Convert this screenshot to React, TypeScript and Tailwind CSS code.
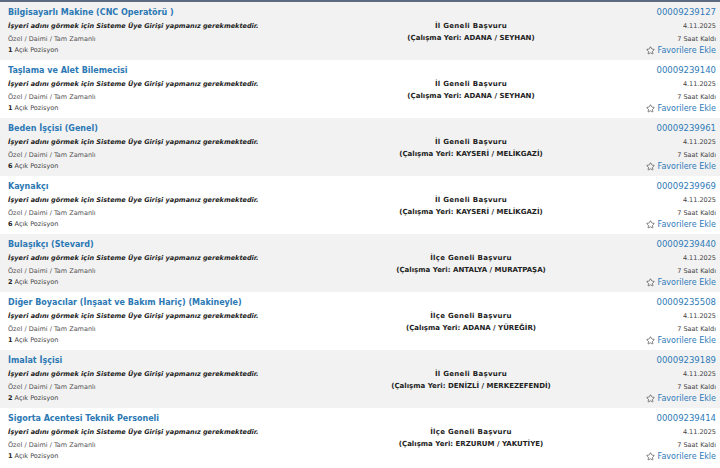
import { Star } from 'lucide-react';

const jobs = [
  { title: 'Bilgisayarlı Makine (CNC Operatörü )', scope: 'İl Geneli Başvuru', place: 'ADANA / SEYHAN', no: '00009239127', count: 1 },
  { title: 'Taşlama ve Alet Bilemecisi', scope: 'İl Geneli Başvuru', place: 'ADANA / SEYHAN', no: '00009239140', count: 1 },
  { title: 'Beden İşçisi (Genel)', scope: 'İl Geneli Başvuru', place: 'KAYSERİ / MELİKGAZİ', no: '00009239961', count: 6 },
  { title: 'Kaynakçı', scope: 'İl Geneli Başvuru', place: 'KAYSERİ / MELİKGAZİ', no: '00009239969', count: 6 },
  { title: 'Bulaşıkçı (Stevard)', scope: 'İlçe Geneli Başvuru', place: 'ANTALYA / MURATPAŞA', no: '00009239440', count: 2 },
  { title: 'Diğer Boyacılar (İnşaat ve Bakım Hariç) (Makineyle)', scope: 'İlçe Geneli Başvuru', place: 'ADANA / YÜREĞİR', no: '00009235508', count: 1 },
  { title: 'İmalat İşçisi', scope: 'İl Geneli Başvuru', place: 'DENİZLİ / MERKEZEFENDİ', no: '00009239189', count: 2 },
  { title: 'Sigorta Acentesi Teknik Personeli', scope: 'İlçe Geneli Başvuru', place: 'ERZURUM / YAKUTİYE', no: '00009239414', count: 1 },
];

export default function App() {
  return (
    <div className="w-[720px] h-[468px] overflow-hidden bg-white border-t-2 border-[#5b6b80] font-['DejaVu_Sans',Verdana,sans-serif]">
      {jobs.map((job, i) => (
        <div
          key={job.no}
          className={`grid grid-cols-[342px_258px_120px] h-[58px] ${i % 2 === 0 ? 'bg-[#f2f2f2]' : 'bg-white'}`}
        >
          <div className="pl-2 pt-[3px]">
            <div className="text-[8px] font-bold leading-[15px] text-[#2b78b4]">{job.title}</div>
            <div className="text-[6.5px] font-bold italic leading-[13px] text-[#222]">
              İşyeri adını görmek için Sisteme Üye Girişi yapmanız gerekmektedir.
            </div>
            <div className="text-[6.5px] leading-[12px] text-[#555]">Özel / Daimi / Tam Zamanlı</div>
            <div className="text-[6.5px] leading-[11px] text-[#444]">
              <span className="font-bold text-[#222]">{job.count}</span> Açık Pozisyon
            </div>
          </div>
          <div className="flex flex-col justify-center items-center pt-[2px] text-[7px] font-bold text-[#222]">
            <div className="leading-[12px] tracking-[0.3px]">{job.scope}</div>
            <div className="leading-[12px]">(Çalışma Yeri: {job.place})</div>
          </div>
          <div className="pr-[4px] pt-[3px] text-right">
            <div className="text-[8.5px] leading-[15px] text-[#2f7ab8]">{job.no}</div>
            <div className="text-[6.5px] leading-[13px] text-[#444]">4.11.2025</div>
            <div className="text-[6.5px] leading-[12px] text-[#444]">7 Saat Kaldı</div>
            <div className="flex items-center justify-end gap-[3px] text-[8px] leading-[11px] text-[#2f7ab8]">
              <Star size={9} strokeWidth={1.6} className="text-[#333]" />
              Favorilere Ekle
            </div>
          </div>
        </div>
      ))}
    </div>
  );
}
